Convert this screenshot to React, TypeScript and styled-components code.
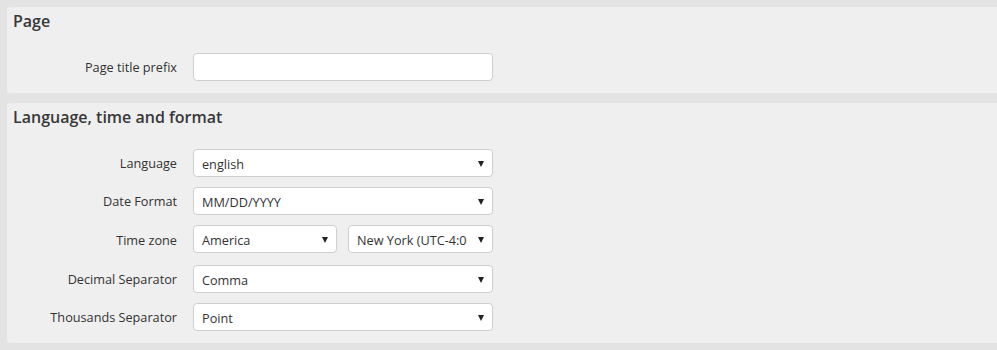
import React from 'react'
import styled, { createGlobalStyle } from 'styled-components'

const GlobalStyle = createGlobalStyle`
  html, body {
    margin: 0;
    height: 100%;
    background: #e3e3e3;
    overflow: hidden;
  }
  body {
    font-family: 'Open Sans', 'Liberation Sans', sans-serif;
    color: #333;
  }
`

const Page = styled.div`
  padding: 7px 0 0 7px;
  display: flex;
  flex-direction: column;
  gap: 10px;
`

const Panel = styled.section`
  background: #efefef;
  border-radius: 3px 0 0 3px;
  margin-right: -20px;
  padding: 3px 0 12px 6px;
`

const Title = styled.h2`
  margin: 0 0 21px;
  font-size: 16px;
  line-height: 22px;
  font-weight: 600;
  color: #383838;
`

const Form = styled.div`
  display: grid;
  grid-template-columns: 164px 300px;
  column-gap: 16px;
  row-gap: 10px;
  align-items: center;
`

const Label = styled.label`
  text-align: right;
  font-size: 12.7px;
  line-height: 28px;
  color: #333;
`

const TextInput = styled.input`
  box-sizing: border-box;
  width: 300px;
  height: 28px;
  border: 1px solid #cfcfcf;
  border-radius: 4px;
  background: #fff;
  font: 12.7px 'Open Sans', sans-serif;
  padding: 0 8px;
  outline: none;
`

const Pair = styled.div`
  display: flex;
  gap: 11px;
  margin-bottom: 2px;
`

const SelectWrap = styled.div<{ $width?: number }>`
  position: relative;
  width: ${(p) => p.$width ?? 300}px;
  height: 28px;

  &::after {
    content: '';
    position: absolute;
    right: 9px;
    top: 12px;
    border-left: 3.5px solid transparent;
    border-right: 3.5px solid transparent;
    border-top: 6px solid #222;
    pointer-events: none;
  }
`

const Select = styled.select`
  appearance: none;
  box-sizing: border-box;
  width: 100%;
  height: 28px;
  border: 1px solid #cfcfcf;
  border-radius: 4px;
  background: #fff;
  color: #333;
  font: 12.7px 'Open Sans', sans-serif;
  padding: 2px 25px 0 8px;
  outline: none;
`

const Dropdown = ({ value, width }: { value: string; width?: number }) => (
  <SelectWrap $width={width}>
    <Select defaultValue={value}>
      <option>{value}</option>
    </Select>
  </SelectWrap>
)

export default function App() {
  return (
    <>
      <GlobalStyle />
      <Page>
        <Panel>
          <Title>Page</Title>
          <Form>
            <Label>Page title prefix</Label>
            <TextInput type="text" />
          </Form>
        </Panel>
        <Panel>
          <Title>Language, time and format</Title>
          <Form>
            <Label>Language</Label>
            <Dropdown value="english" />
            <Label>Date Format</Label>
            <Dropdown value="MM/DD/YYYY" />
            <Label>Time zone</Label>
            <Pair>
              <Dropdown value="America" width={144} />
              <Dropdown value="New York (UTC-4:00)" width={145} />
            </Pair>
            <Label>Decimal Separator</Label>
            <Dropdown value="Comma" />
            <Label>Thousands Separator</Label>
            <Dropdown value="Point" />
          </Form>
        </Panel>
      </Page>
    </>
  )
}
